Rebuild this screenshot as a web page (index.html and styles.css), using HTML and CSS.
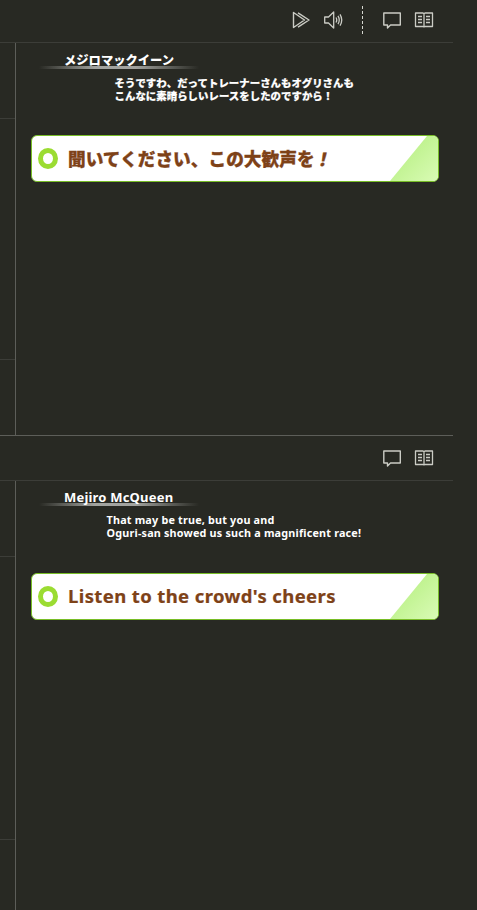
FILE: index.html
```html
<!DOCTYPE html>
<html lang="ja">
<head>
<meta charset="utf-8">
<title>Story</title>
<link rel="stylesheet" href="styles.css">
</head>
<body>
<main class="app">
  <section class="panel panel-ja">
    <header class="toolbar">
      <svg class="icon" viewBox="0 0 20 20"><path d="M1.5 2.5V17.5L12.5 10Z M6 2.8L17 10L6 17.2"/></svg>
      <svg class="icon icon-sound" viewBox="0 0 20 20"><path d="M.7 7H4.5L9.7 2V18L4.5 13H.7Z M12 7.5Q13.5 10 12 12.5 M14 5.8Q16.5 10 14 14.2 M16 4.3Q19.5 10 16 15.7"/></svg>
      <span class="divider"></span>
      <svg class="icon" viewBox="0 0 20 20"><path d="M1.8 3H18.3V15H8.5L5.5 18V15H1.8Z"/></svg>
      <svg class="icon icon-book" viewBox="0 0 20 20"><path d="M1.5 3H9L10 3.6L11 3H18.5V16.5H11L10 17L9 16.5H1.5Z M10 4V17 M4 6.5H8 M4 9.5H8 M4 12.5H8 M12 6.5H16 M12 9.5H16 M12 12.5H16"/></svg>
    </header>
    <div class="content">
      <aside class="rail"><div class="rail-top"></div><div class="rail-mid"></div></aside>
      <article class="story">
        <h2 class="name"><span>メジロマックイーン</span></h2>
        <p class="line">そうですわ、だってトレーナーさんもオグリさんも<br>こんなに素晴らしいレースをしたのですから！</p>
        <div class="choice"><i class="ring"></i><span class="label">聞いてください、この大歓声を<em>！</em></span><i class="corner"></i></div>
      </article>
    </div>
  </section>
  <section class="panel panel-en" lang="en">
    <header class="toolbar">
      <svg class="icon" viewBox="0 0 20 20"><path d="M1.8 3H18.3V15H8.5L5.5 18V15H1.8Z"/></svg>
      <svg class="icon icon-book" viewBox="0 0 20 20"><path d="M1.5 3H9L10 3.6L11 3H18.5V16.5H11L10 17L9 16.5H1.5Z M10 4V17 M4 6.5H8 M4 9.5H8 M4 12.5H8 M12 6.5H16 M12 9.5H16 M12 12.5H16"/></svg>
    </header>
    <div class="content">
      <aside class="rail"><div class="rail-top"></div><div class="rail-mid"></div></aside>
      <article class="story">
        <h2 class="name"><span>Mejiro McQueen</span></h2>
        <p class="line">That may be true, but you and<br>Oguri-san showed us such a magnificent race!</p>
        <div class="choice"><i class="ring"></i><span class="label">Listen to the crowd's cheers</span><i class="corner"></i></div>
      </article>
    </div>
  </section>
</main>
</body>
</html>
```
FILE: styles.css
```css
* { box-sizing: border-box; }
body { margin: 0; background: #282923; color: #fff; font-family: "Noto Sans", "Noto Sans CJK JP", sans-serif; overflow: hidden; }
.app { width: 453px; height: 910px; }
.panel { display: flex; flex-direction: column; }
.panel-ja { height: 436px; border-bottom: 1px solid #5d5e59; font-family: "Noto Sans CJK JP", sans-serif; }
.panel-en { height: 474px; }
.toolbar { height: 43px; flex: none; display: flex; align-items: center; justify-content: flex-end; gap: 12px; padding: 0 19px 2px 0; border-bottom: 1px solid #3c3d38; }
.panel-en .toolbar { height: 45px; padding-bottom: 0; }
.icon { width: 20px; height: 20px; fill: none; stroke: #cbccc5; stroke-width: 1.4; stroke-linejoin: round; }
.icon-sound { stroke-width: 1.3; }
.icon-book { stroke-width: 1.3; }
.divider { width: 1px; height: 28px; margin: 0 7px 0 6px; background: repeating-linear-gradient(#d5d6d0 0 3px, transparent 3px 5px); }
.content { flex: 1; display: flex; min-height: 0; }
.rail { width: 16px; border-right: 1px solid #5d5e59; }
.rail-top { height: 76px; border-bottom: 1px solid #3c3d38; }
.rail-mid { height: 241px; border-bottom: 1px solid #3c3d38; }
.panel-en .rail-mid { height: 283px; }
.story { flex: 1; padding: 8px 14px 0 15px; }
.name { width: 160px; height: 18px; margin: 0 0 0 8px; padding-left: 25px; white-space: nowrap; font-size: 12.3px; font-weight: 900; line-height: 18px; background: linear-gradient(90deg, transparent, #a2a39f 35%, #a2a39f 60%, transparent) 0 100% / 100% 3px no-repeat; }
.line { margin: 7px 0 0 83.5px; white-space: nowrap; font-size: 10.4px; font-weight: 900; line-height: 13px; letter-spacing: .05px; -webkit-text-stroke: .2px #fff; }
.choice { display: flex; align-items: center; height: 47px; margin-top: 33px; border: 1px solid #78bd27; border-radius: 6px; background: #fff; overflow: hidden; padding-left: 6px; }
.ring { width: 20px; height: 21px; border: 5px solid #9bdc32; border-radius: 50%; flex: none; }
.label { flex: 1; margin-left: 10px; padding-bottom: 2px; white-space: nowrap; color: #7e4218; font-size: 17.7px; font-weight: 900; line-height: 28px; -webkit-text-stroke: .3px #7e4218; }
.label em { display: inline-block; font-style: normal; transform: skewX(-12deg); }
.corner { width: 48px; height: 45px; background: linear-gradient(135deg, #b0ed78, #d9fbb5); clip-path: polygon(37px 0, 100% 0, 100% 100%, 0 100%); }
.panel-en .story { padding-top: 7px; }
.panel-en .name { font-size: 13px; font-weight: 700; letter-spacing: .2px; }
.panel-en .line { margin: 7px 0 0 75.5px; font-size: 10.8px; font-weight: 700; letter-spacing: .19px; -webkit-text-stroke: 0; }
.panel-en .label { padding-bottom: 1px; font-size: 18.5px; font-weight: 700; letter-spacing: .38px; -webkit-text-stroke: .2px #7e4218; }
.panel-en .choice { margin-top: 34px; }
```
